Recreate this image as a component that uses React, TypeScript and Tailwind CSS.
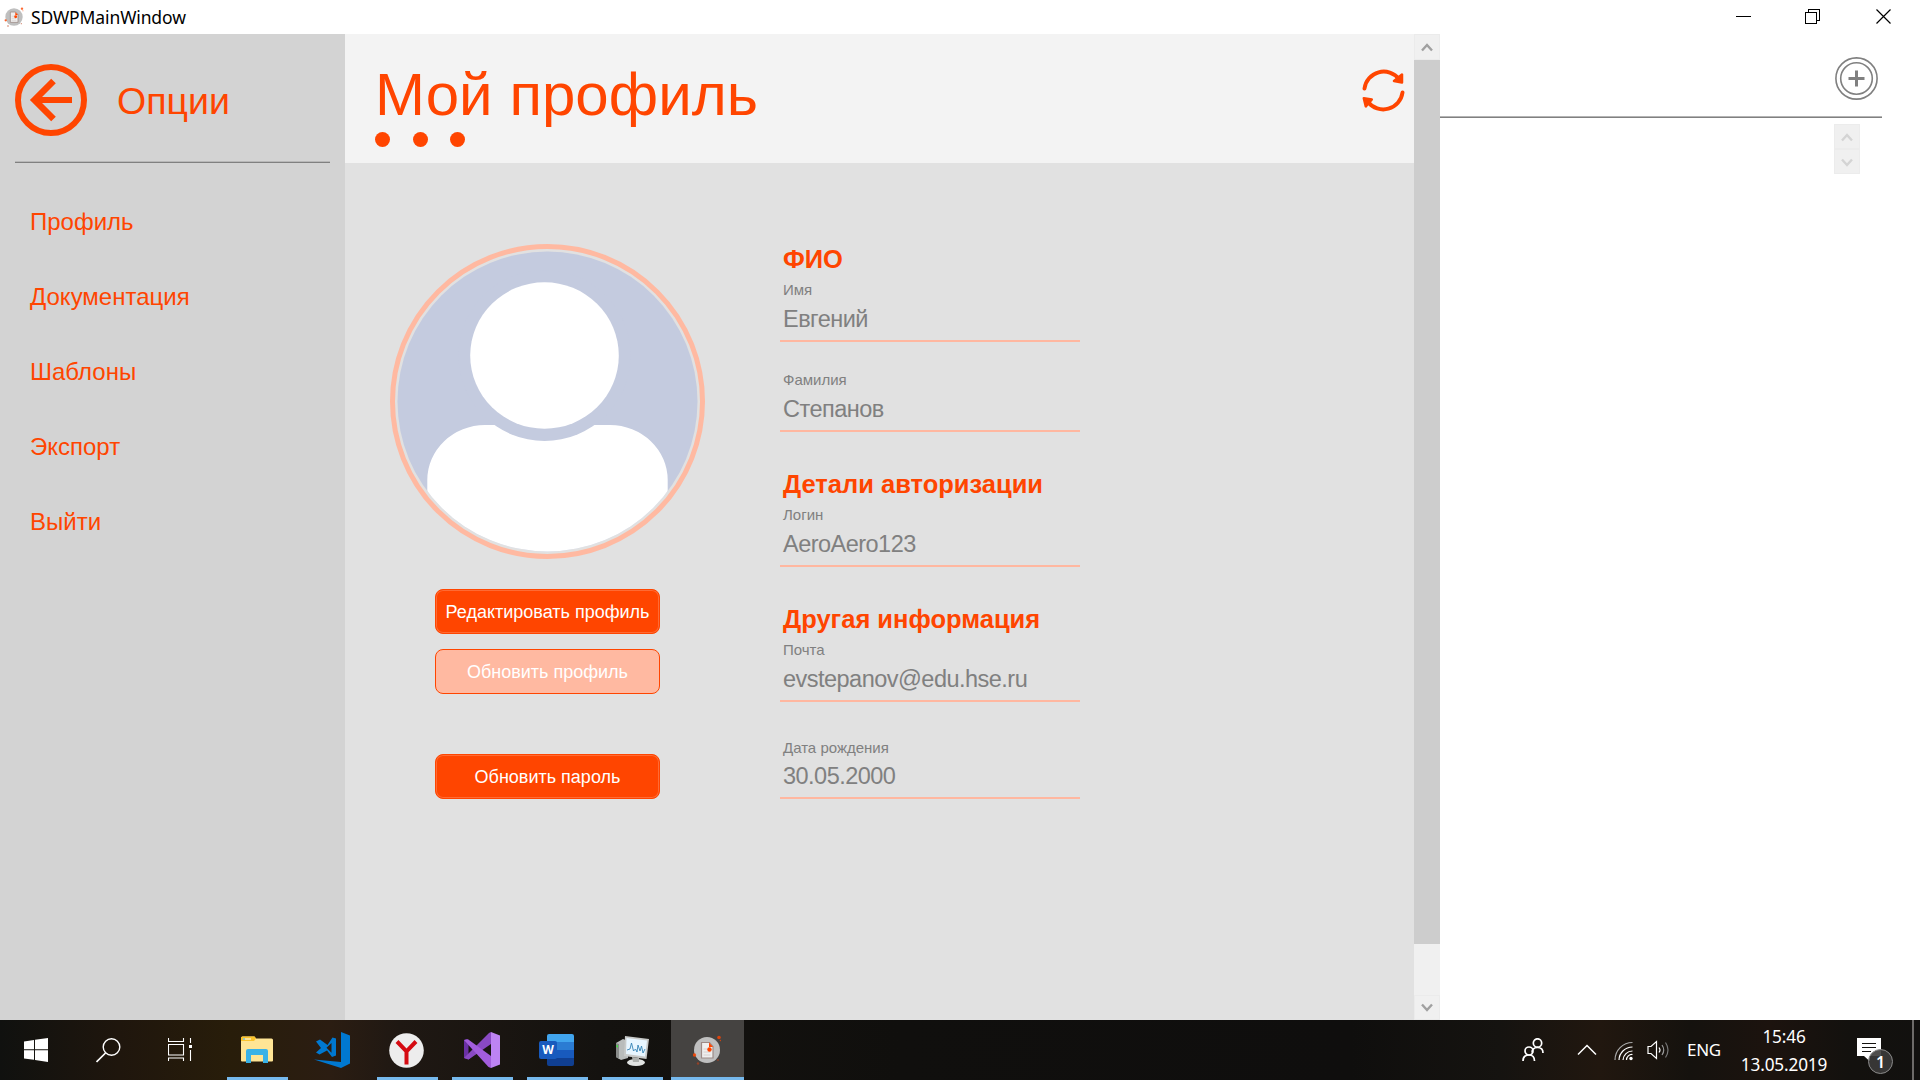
import React from "react";

const ARIAL = "font-['Liberation_Sans',Arial,sans-serif]";
const SEGOE = "font-['Noto_Sans','Open_Sans',sans-serif]";

function AppIcon({ className }: { className: string }) {
  return (
    <svg viewBox="0 0 28 30" className={className}>
      <circle cx="14" cy="15" r="13" fill="#bfbfbf" />
      <path d="M8.500 7.500h8l3.500 4v11.500H8.500z" fill="#efefef" stroke="#9d8b87" strokeWidth="1.200" />
      <path d="M16 7.500l4 4.500h-4z" fill="#ff4500" />
      <path d="M10.500 14h5M10.500 17h7M10.500 20h7" stroke="#d8d0ce" strokeWidth="1" />
      <circle cx="16.500" cy="14.500" r="2.200" fill="#ff4500" />
      <circle cx="26" cy="2.500" r="1.800" fill="#ff4500" opacity=".8" />
      <circle cx="27.400" cy="5.500" r=".8" fill="#ff4500" opacity=".7" />
      <circle cx="1.500" cy="20" r="1.700" fill="#ff4500" opacity=".85" />
      <circle cx="5" cy="28.500" r="1.200" fill="#b5401c" opacity=".7" />
      <circle cx="25" cy="25" r="1" fill="#b5401c" opacity=".6" />
    </svg>
  );
}

function TitleBar() {
  return (
    <header className="flex h-[34px] items-center bg-white pl-1">
      <AppIcon className="h-5 w-5" />
      <span className={`ml-[7px] text-[17.5px] leading-[34px] tracking-[-0.12px] text-black ${SEGOE}`}>SDWPMainWindow</span>
      <svg className="ml-auto mr-[28px] h-4 w-[156px]" viewBox="0 0 156 16" fill="none" stroke="#000" shapeRendering="crispEdges">
        <path d="M0 7.500h15" />
        <path d="M69.500 3.500h11v11h-11zM72.500 3v-2.500h11v11h-3" />
        <path d="M140.500 .5l14 14M154.500 .5l-14 14" shapeRendering="auto" strokeWidth="1.200" />
      </svg>
    </header>
  );
}

const MENU = ["Профиль", "Документация", "Шаблоны", "Экспорт", "Выйти"];

function Sidebar() {
  return (
    <aside className="flex w-[345px] shrink-0 flex-col bg-[#d3d3d3] px-[15px]">
      <div className="mt-[30px] flex h-[72px] items-center">
        <svg viewBox="0 0 72 72" className="h-[72px] w-[72px]" fill="none" stroke="#ff4500">
          <circle cx="36" cy="36" r="33" strokeWidth="6" />
          <path d="M57 36H20" strokeWidth="6" />
          <path d="M38.500 17L19.500 36l19 19" strokeWidth="6.500" />
        </svg>
        <span className="ml-[30px] mt-[2px] text-[37.5px] leading-[40px] text-[#ff4500]">Опции</span>
      </div>
      <div className="mt-[25px] h-[2px] border-t border-[#b8b8b8] bg-[#808080]" />
      <nav className="mt-[21px] flex flex-col">
        {MENU.map((m) => (
          <a key={m} className="flex h-[75px] items-center pl-[15px] text-[24px] leading-[30px] text-[#ff4500]">
            {m}
          </a>
        ))}
      </nav>
    </aside>
  );
}

function PageHeader() {
  return (
    <div className="flex h-[129px] shrink-0 justify-between bg-[#f3f3f3] pl-[30px] pr-[9px]">
      <div className="pt-[31px]">
        <h1 className="text-[60px] leading-[60px] tracking-[0.05px] text-[#ff4500]">Мой профиль</h1>
        <div className="mt-[6.5px] flex gap-[22.5px]">
          <i className="h-[15px] w-[15px] rounded-full bg-[#ff4500]" />
          <i className="h-[15px] w-[15px] rounded-full bg-[#ff4500]" />
          <i className="h-[15px] w-[15px] rounded-full bg-[#ff4500]" />
        </div>
      </div>
      <svg viewBox="0 0 43 43" className="mt-[35px] h-[43px] w-[43px]" fill="none" stroke="#ff4500" strokeWidth="3.900" strokeLinecap="round">
        <path d="M2.500 19.500A19.400 19.400 0 0 1 37 10" />
        <path d="M40.500 23.500A19.400 19.400 0 0 1 6 33" />
        <path d="M40 5.500v8l-8-1.500z" strokeWidth="2.500" strokeLinejoin="round" fill="#ff4500" />
        <path d="M1.800 29.200l8 1.200-6 7z" strokeWidth="2.500" strokeLinejoin="round" fill="#ff4500" />
      </svg>
    </div>
  );
}

function Avatar() {
  return (
    <svg viewBox="390 244 315 315" className="h-[315px] w-[315px]">
      <defs>
        <clipPath id="portrait">
          <circle cx="547.500" cy="401.500" r="150" />
        </clipPath>
      </defs>
      <circle cx="547.500" cy="401.500" r="155" fill="none" stroke="#ffb9a1" strokeWidth="5" />
      <g clipPath="url(#portrait)">
        <rect x="390" y="244" width="315" height="315" fill="#c4cbdf" />
        <path d="M427.300 560V480A58 55 0 0 1 485 425H610A58 55 0 0 1 667.700 480V560z" fill="#fff" />
        <ellipse cx="544.500" cy="355.500" rx="86" ry="85.500" fill="#c4cbdf" />
        <ellipse cx="544.500" cy="355.500" rx="74.300" ry="73.200" fill="#fff" />
      </g>
    </svg>
  );
}

function Button({ label, className }: { label: string; className: string }) {
  return (
    <button className={`flex h-[45px] w-[225px] items-center justify-center rounded-[8px] border border-[#ff4500] text-[18px] leading-[20px] whitespace-nowrap text-white ${className}`}>
      {label}
    </button>
  );
}

function Field({ label, value, className, valueClass = "mt-[5px] h-[38px]" }: { label: string; value: string; className: string; valueClass?: string }) {
  return (
    <div className={`w-[300px] ${className}`}>
      <div className="pl-[3px] text-[15px] leading-[18px] text-[#808080]">{label}</div>
      <div className={`border-b-2 border-[#ffb7a0] pl-[3px] text-[23.5px] leading-[30px] tracking-[-0.52px] text-[#808080] ${valueClass}`}>{value}</div>
    </div>
  );
}

function Heading({ text, className }: { text: string; className: string }) {
  return <h2 className={`pl-[3px] text-[25.5px] font-bold leading-[30px] text-[#ff4500] ${className}`}>{text}</h2>;
}

function Profile() {
  return (
    <div className="flex flex-1 pl-[45px] pt-[81px]">
      <div className="flex w-[315px] flex-col items-center">
        <Avatar />
        <Button label="Редактировать профиль" className="mt-[30px] bg-[#ff4500] shadow-[inset_0_0_0_1px_#ff6a33]" />
        <Button label="Обновить профиль" className="mt-[15px] bg-[#ffb9a1]" />
        <Button label="Обновить пароль" className="mt-[60px] bg-[#ff4500] shadow-[inset_0_0_0_1px_#ff6a33]" />
      </div>
      <div className="ml-[75px] flex flex-col">
        <Heading text="ФИО" className="" />
        <Field label="Имя" value="Евгений" className="mt-[7px]" />
        <Field label="Фамилия" value="Степанов" className="mt-[29px]" />
        <Heading text="Детали авторизации" className="mt-[37px]" />
        <Field label="Логин" value="AeroAero123" className="mt-[7px]" />
        <Heading text="Другая информация" className="mt-[37px]" />
        <Field label="Почта" value="evstepanov@edu.hse.ru" className="mt-[7px]" />
        <Field label="Дата рождения" value="30.05.2000" className="mt-[37px]" valueClass="mt-[4px] h-[38px]" />
      </div>
    </div>
  );
}

function Chevron({ down = false, color }: { down?: boolean; color: string }) {
  return (
    <svg viewBox="0 0 12 10" className="h-[10px] w-3" fill="none" stroke={color} strokeWidth="2.400">
      <path d={down ? "M1 1.500l5 5.500 5-5.500" : "M1 8.500L6 3l5 5.500"} />
    </svg>
  );
}

function ScrollBar() {
  return (
    <div className="flex w-[26px] shrink-0 flex-col bg-[#f0f0f0]">
      <div className="flex h-[26px] items-center justify-center border border-[#ebebeb]">
        <Chevron color="#a0a0a0" />
      </div>
      <div className="h-[884px] bg-[#cdcdcd]" />
      <div className="mt-auto flex h-[25px] items-center justify-center border border-[#ebebeb]">
        <Chevron down color="#a0a0a0" />
      </div>
    </div>
  );
}

function RightPane() {
  return (
    <section className="flex flex-1 flex-col bg-white pr-[38px]">
      <div className="flex h-[82px] justify-end pr-[4px] pt-[23px]">
        <svg viewBox="0 0 43 43" className="h-[43px] w-[43px]" fill="none" stroke="#808080">
          <circle cx="21.500" cy="21.500" r="20.600" strokeWidth="1.600" />
          <circle cx="21.500" cy="21.500" r="15.800" strokeWidth="1.600" />
          <path d="M21.500 13.500v16M13.500 21.500h16" strokeWidth="3" />
        </svg>
      </div>
      <div className="h-[2px] shrink-0 border-t border-[#b4b4b4] bg-[#808080]" />
      <div className="mt-[6px] mr-[22px] flex w-[26px] flex-col self-end bg-[#f0f0f0]">
        <div className="flex h-[25px] items-center justify-center border border-[#ececec]">
          <Chevron color="#d4d4d4" />
        </div>
        <div className="flex h-[25px] items-center justify-center border border-[#ececec] pt-[2px]">
          <Chevron down color="#d4d4d4" />
        </div>
      </div>
    </section>
  );
}

function Task({ children, className, running = true }: { children: React.ReactNode; className: string; running?: boolean }) {
  return (
    <div className={`flex h-[60px] shrink-0 flex-col items-center ${className}`}>
      <div className="flex h-[57px] items-center justify-center pt-[3px]">{children}</div>
      {running && <div className="h-[3px] w-full bg-[#76b9ed]" />}
    </div>
  );
}

function TaskBar() {
  return (
    <footer className={`flex h-[60px] bg-[linear-gradient(90deg,#10110f_0px,#1f160d_120px,#281d0a_230px,#2b1d12_330px,#1f1813_400px,#14120f_600px,#100f0d_900px,#0f0e0d_1350px,#151310_1500px,#21170f_1600px,#15120e_1690px,#1c130e_1770px,#13110e_1850px,#12110f_1920px)] text-white ${SEGOE}`}>
      <div className="flex w-[227px] items-center pl-6">
        <svg viewBox="0 0 24 24" className="h-6 w-6" fill="#fff">
          <path d="M0 3.400l10-1.400v9.300H0zM11 1.800L24 0v11.300H11zM0 12.300h10v9.500L0 20.500zM11 12.300h13V24l-13-1.900z" />
        </svg>
        <svg viewBox="0 0 25 25" className="ml-12 h-[25px] w-[25px]" fill="none" stroke="#fff" strokeWidth="1.400">
          <circle cx="15.500" cy="9" r="8.300" />
          <path d="M9.500 15L.5 24" strokeWidth="1.700" />
        </svg>
        <svg viewBox="0 0 25 24" className="ml-[47px] h-6 w-[25px]" fill="none" stroke="#fff">
          <path d="M.5 0v3.500h15V0M.5 6.500h15v10.500H.5zM.5 23v-3h15v3M22.500 0v5M22.500 12v11" strokeWidth="1.100" />
          <path d="M21 7h3v3h-3z" fill="#fff" stroke="none" />
        </svg>
      </div>
      <Task className="w-[61px]">
        <svg viewBox="0 0 32 28" className="-mt-[1px] mr-px h-7 w-8">
          <path d="M0 2a1.500 1.500 0 0 1 1.500-1.500h12L15 2.500h15.500A1.500 1.500 0 0 1 32 4v20.500a1 1 0 0 1-1 1H1a1 1 0 0 1-1-1z" fill="#ffe595" />
          <path d="M0 5V2A1.500 1.500 0 0 1 1.500.5h12L15 2.500 13 5z" fill="#fcc42c" />
          <path d="M2 2.500h8v1H2z" fill="#fff" />
          <path d="M2 2.500h2v1H2z" fill="#39b2e7" />
          <path d="M5 27V15a2 2 0 0 1 2-2h18a2 2 0 0 1 2 2v12h-5v-8H10v8z" fill="#39b2e7" />
        </svg>
      </Task>
      <Task className="ml-[14px] w-[61px]" running={false}>
        <svg viewBox="0 0 36 36" className="mr-[2px] h-9 w-9">
          <path d="M27 0l9 3.500v28L27 36 0 27.500l27 2.500z" fill="#0078d0" />
          <path d="M2 9.500l4-2 7.500 5.500 5-7.500 3.500 1v17l-4 1.500-5-6.500-7.500 4L2 20.500l5-4.500zM17.500 11l-5 4.700 5 5z" fill="#0078d0" fillRule="evenodd" />
        </svg>
      </Task>
      <Task className="ml-[14px] w-[61px]">
        <svg viewBox="0 0 35 35" className="mr-[2px] h-[35px] w-[35px]">
          <circle cx="17.500" cy="17.500" r="17.300" fill="#ededed" />
          <path d="M8 8.500l9.500 9.800L27 8.500M17.500 17v14.500" fill="none" stroke="#d50b12" strokeWidth="4" />
        </svg>
      </Task>
      <Task className="ml-[14px] w-[61px]">
        <svg viewBox="0 0 36 36" className="mr-[2px] h-9 w-9">
          <path d="M0 8l3-1 12 12-10.500 8.500L0 26z" fill="#6a30a5" />
          <path d="M4.500 13v10l5-4.500z" fill="#171411" />
          <path d="M0 26L25 1l2-1v12L4.500 27.500z" fill="#8949c3" />
          <path d="M0 8l4-.7L27 24v12l-2.500-1z" fill="#a25ddc" />
          <path d="M27 0l9 3.500v29L27 36z" fill="#bd83f3" />
        </svg>
      </Task>
      <Task className="ml-[14px] w-[61px]">
        <div className="relative mr-[2px] h-8 w-[35px]">
          <div className="ml-2 flex h-8 w-[27px] flex-col overflow-hidden rounded-[2px]">
            <i className="h-2 bg-[#41a5ee]" />
            <i className="h-2 bg-[#2b7cd3]" />
            <i className="h-2 bg-[#185abd]" />
            <i className="h-2 bg-[#103f91]" />
          </div>
          <div className="absolute top-[7px] left-0 flex h-[18px] w-[18px] items-center justify-center rounded-[2px] bg-[#185abd] text-[12px] font-bold">W</div>
        </div>
      </Task>
      <Task className="ml-[14px] w-[61px]">
        <svg viewBox="0 0 34 32" className="mr-[2px] mt-[2px] h-8 w-[34px]">
          <path d="M1 8l7-4 5 2v17l-7 2-5-3z" fill="#b9bcbb" />
          <path d="M1 8l3 1v15l-3-2z" fill="#898c8a" />
          <path d="M1.500 10l1.500.5v2L1.500 12z" fill="#38e43a" />
          <path d="M10 1l24 3-2.500 20L9 21z" fill="#c8cac9" />
          <path d="M11.500 3L32 5.500l-2 16L11 19z" fill="#e8f6ff" />
          <path d="M12 15l3-1 1.500-6 2 8 2-2 1.500 3 1-7 2 6 1.500-5 1.500 7 2-4" fill="none" stroke="#3483b5" strokeWidth=".9" />
          <ellipse cx="21" cy="27.500" rx="9" ry="3.500" fill="#e1e3e2" />
          <path d="M17 22l7 1v4h-6z" fill="#aeb1af" />
        </svg>
      </Task>
      <Task className="ml-2 w-[73px] bg-[#454341]">
        <AppIcon className="-ml-[1px] h-[30px] w-[28px]" />
      </Task>
      <div className="ml-auto flex w-[390px] items-center">
        <svg viewBox="0 0 22 24" className="h-6 w-[22px]" fill="none" stroke="#fff" strokeWidth="1.700">
          <circle cx="15.500" cy="5" r="4.200" />
          <path d="M10.500 15c-1-3 1-5.500 5-5.500s5.500 2.500 5.500 5.500" />
          <circle cx="7" cy="13" r="4" />
          <path d="M1 23c0-3.500 2-6 6-6s5.500 2.500 5.500 6" />
        </svg>
        <svg viewBox="0 0 20 12" className="ml-[33px] h-3 w-5" fill="none" stroke="#fff" strokeWidth="1.500">
          <path d="M1 10.500l9-9 9 9" />
        </svg>
        <svg viewBox="0 0 20 20" className="ml-[17px] mt-[2px] h-5 w-5" fill="none" stroke="#fff" strokeWidth="1.200">
          <path d="M1 19A17.500 17.500 0 0 1 18.500 1.500" stroke="#aaa" />
          <path d="M5 19A13.500 13.500 0 0 1 18.500 6" />
          <path d="M9 19a9.500 9.500 0 0 1 9.500-9" />
          <path d="M12.500 19a5.500 5.500 0 0 1 6-5.500" />
          <circle cx="17" cy="17.500" r="1.700" fill="#fff" stroke="none" />
        </svg>
        <svg viewBox="0 0 24 20" className="ml-[13px] h-5 w-6" fill="none" stroke="#fff" strokeWidth="1.200">
          <path d="M1 6.500h3L9.500 1.500v17L4 13.500H1z" />
          <path d="M12 7.500q2 2.500 0 5" />
          <path d="M15 5q3.500 5 0 10" stroke="#999" />
          <path d="M18.500 2.500q5 7.500 0 15" stroke="#777" />
        </svg>
        <span className="ml-[16px] w-[34px] text-[17px] leading-[20px] tracking-[-0.3px]">ENG</span>
        <div className="ml-[13px] mt-px flex w-[100px] flex-col items-center text-[17.2px] leading-[28px] tracking-[-0.15px]">
          <span>15:46</span>
          <span>13.05.2019</span>
        </div>
        <div className="relative mt-[12px] ml-[23px] h-[36px] w-[37px] shrink-0">
          <svg viewBox="0 0 24 24" className="h-6 w-6">
            <path d="M0 0h24v18H13v5.500L7 18H0z" fill="#fff" />
            <path d="M5 5.500h14M5 9.500h14M5 13.500h9" stroke="#14120f" strokeWidth="1.100" />
          </svg>
          <div className="absolute top-[11px] left-[11px] flex h-[25px] w-[25px] items-center justify-center rounded-full border border-[#8a8a8a] bg-[#3c3b3a]/90 text-[16px] font-semibold leading-none">1</div>
        </div>
      </div>
      <div className="mr-[6px] h-full w-[2px] bg-[#6d6b69]" />
    </footer>
  );
}

export default function App() {
  return (
    <div className={`flex h-[1080px] w-[1920px] flex-col overflow-hidden bg-white ${ARIAL}`}>
      <TitleBar />
      <div className="flex h-[986px]">
        <Sidebar />
        <main className="flex w-[1069px] shrink-0 flex-col bg-[#e1e1e1]">
          <PageHeader />
          <Profile />
        </main>
        <ScrollBar />
        <RightPane />
      </div>
      <TaskBar />
    </div>
  );
}
